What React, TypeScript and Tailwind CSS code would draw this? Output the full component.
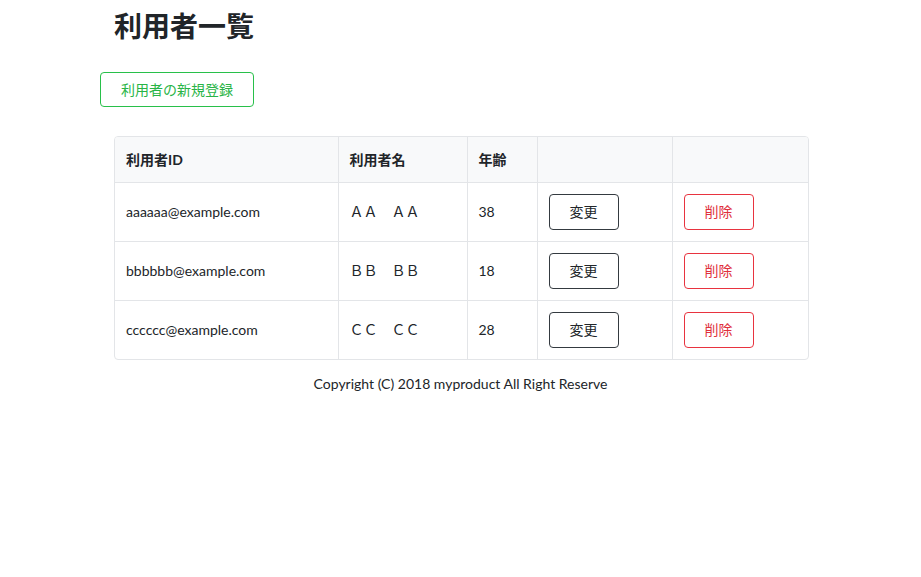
import React from "react";

const users = [
  { id: "aaaaaa@example.com", name: "ＡＡ　ＡＡ", age: 38 },
  { id: "bbbbbb@example.com", name: "ＢＢ　ＢＢ", age: 18 },
  { id: "cccccc@example.com", name: "ＣＣ　ＣＣ", age: 28 },
];

const font = { fontFamily: 'Lato, "Noto Sans CJK JP", sans-serif' };

export default function App() {
  return (
    <div className="min-h-[577px] w-[921px] bg-white text-[#212529]" style={font}>
      <div className="pl-[114px] pt-[8px]">
        <h1 className="text-[28px] font-bold leading-[36px] text-[#212529]">利用者一覧</h1>
      </div>
      <div className="pl-[100px] pt-[28px]">
        <button className="h-[35px] w-[154px] rounded-[4px] border border-[#28c04a] text-[14px] text-[#28b446]">
          利用者の新規登録
        </button>
      </div>
      <div className="ml-[114px] mt-[29px] w-[695px] overflow-hidden rounded-[4px] border border-[#e3e5e8]">
        <table className="w-full table-fixed border-collapse text-[14px]">
          <colgroup>
            <col className="w-[223px]" />
            <col className="w-[129px]" />
            <col className="w-[70px]" />
            <col className="w-[135px]" />
            <col />
          </colgroup>
          <thead>
            <tr className="h-[45px] bg-[#f8f9fa]">
              <th className="px-[11px] text-left font-bold">利用者ID</th>
              <th className="border-l border-[#e3e5e8] px-[11px] text-left font-bold">利用者名</th>
              <th className="border-l border-[#e3e5e8] px-[11px] text-left font-bold">年齢</th>
              <th className="border-l border-[#e3e5e8]"></th>
              <th className="border-l border-[#e3e5e8]"></th>
            </tr>
          </thead>
          <tbody>
            {users.map((u) => (
              <tr key={u.id} className="h-[59px] border-t border-[#e3e5e8]">
                <td className="px-[11px]">{u.id}</td>
                <td className="border-l border-[#e3e5e8] px-[11px]">{u.name}</td>
                <td className="border-l border-[#e3e5e8] px-[11px]">{u.age}</td>
                <td className="border-l border-[#e3e5e8] px-[11px]">
                  <button className="h-[36px] w-[70px] rounded-[4px] border border-[#343a40] text-[14px] text-[#212529]">
                    変更
                  </button>
                </td>
                <td className="border-l border-[#e3e5e8] px-[11px]">
                  <button className="h-[36px] w-[70px] rounded-[4px] border border-[#e8333f] text-[14px] text-[#e0303c]">
                    削除
                  </button>
                </td>
              </tr>
            ))}
          </tbody>
        </table>
      </div>
      <div className="mt-[14px] text-center text-[14px] leading-[20px]">
        Copyright (C) 2018 myproduct All Right Reserve
      </div>
    </div>
  );
}
